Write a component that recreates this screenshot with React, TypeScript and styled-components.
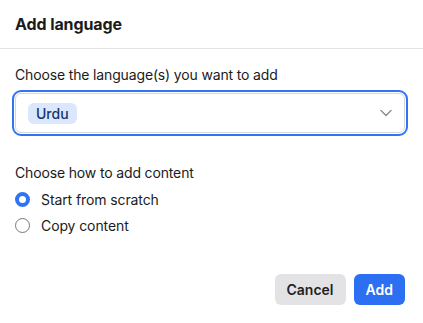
import React, { useState } from "react";
import styled, { createGlobalStyle } from "styled-components";

const Global = createGlobalStyle`
  html, body { margin: 0; padding: 0; background: #fff; }
  body { font-family: Inter, "Noto Sans", sans-serif; color: #1b1b1b; -webkit-font-smoothing: antialiased; }
  * { box-sizing: border-box; }
`;

const Dialog = styled.div`
  width: 423px;
  height: 323px;
  display: flex;
  flex-direction: column;
  background: #fff;
`;

const Header = styled.div`
  height: 49px;
  padding: 0 15px;
  display: flex;
  align-items: center;
  border-bottom: 1px solid #e3e3e5;
`;

const Title = styled.h2`
  margin: 0;
  font-size: 16px;
  font-weight: 700;
  line-height: 20px;
  letter-spacing: -0.1px;
  color: #1b1b1b;
`;

const Body = styled.div`
  flex: 1;
  padding: 16px 18px 0 15px;
  display: flex;
  flex-direction: column;
`;

const Label = styled.div<{ $mb: number }>`
  font-size: 14px;
  line-height: 20px;
  font-weight: 400;
  letter-spacing: -0.15px;
  color: #1b1b1b;
  margin-bottom: ${(p) => p.$mb}px;
`;

const SelectBox = styled.div`
  height: 40px;
  border: 1px solid #d6d6d8;
  border-radius: 6px;
  outline: 2px solid #2f74f3;
  outline-offset: 1px;
  display: flex;
  align-items: center;
  padding: 0 12px 0 12px;
  margin-bottom: 30px;
`;

const Chips = styled.div`
  flex: 1;
  display: flex;
  gap: 6px;
`;

const Chip = styled.span`
  height: 21px;
  padding: 0 8px;
  border-radius: 6px;
  background: #dae7fc;
  color: #16366b;
  font-size: 14px;
  font-weight: 500;
  line-height: 21px;
`;

const RadioList = styled.div`
  display: flex;
  flex-direction: column;
  gap: 6px;
`;

const RadioRow = styled.label`
  height: 20px;
  display: flex;
  align-items: center;
  gap: 11px;
  font-size: 14px;
  letter-spacing: -0.1px;
  color: #1b1b1b;
  cursor: pointer;
`;

const RadioDot = styled.span<{ $checked: boolean }>`
  width: 15px;
  height: 15px;
  border-radius: 50%;
  flex: none;
  background: #fff;
  border: ${(p) => (p.$checked ? "4px solid #2f74f3" : "1px solid #77777a")};
`;

const Footer = styled.div`
  display: flex;
  justify-content: flex-end;
  gap: 8px;
  padding: 0 18px 18px 15px;
`;

const Button = styled.button<{ $primary?: boolean }>`
  height: 31px;
  padding: 0 12px;
  border: none;
  border-radius: 6px;
  font-family: inherit;
  font-size: 14px;
  font-weight: 600;
  cursor: pointer;
  background: ${(p) => (p.$primary ? "#2d6ff2" : "#e3e3e5")};
  color: ${(p) => (p.$primary ? "#ffffff" : "#1f1f1f")};
`;

const Chevron = () => (
  <svg width="12" height="8" viewBox="0 0 12 8" fill="none">
    <path d="M1 1.5l5 5 5-5" stroke="#8c8c8e" strokeWidth="1.4" strokeLinecap="round" strokeLinejoin="round" />
  </svg>
);

export default function App() {
  const [mode, setMode] = useState("scratch");
  return (
    <>
      <Global />
      <Dialog>
        <Header>
          <Title>Add language</Title>
        </Header>
        <Body>
          <Label $mb={8}>Choose the language(s) you want to add</Label>
          <SelectBox>
            <Chips>
              <Chip>Urdu</Chip>
            </Chips>
            <Chevron />
          </SelectBox>
          <Label $mb={6}>Choose how to add content</Label>
          <RadioList>
            <RadioRow onClick={() => setMode("scratch")}>
              <RadioDot $checked={mode === "scratch"} />
              Start from scratch
            </RadioRow>
            <RadioRow onClick={() => setMode("copy")}>
              <RadioDot $checked={mode === "copy"} />
              Copy content
            </RadioRow>
          </RadioList>
        </Body>
        <Footer>
          <Button>Cancel</Button>
          <Button $primary>Add</Button>
        </Footer>
      </Dialog>
    </>
  );
}
